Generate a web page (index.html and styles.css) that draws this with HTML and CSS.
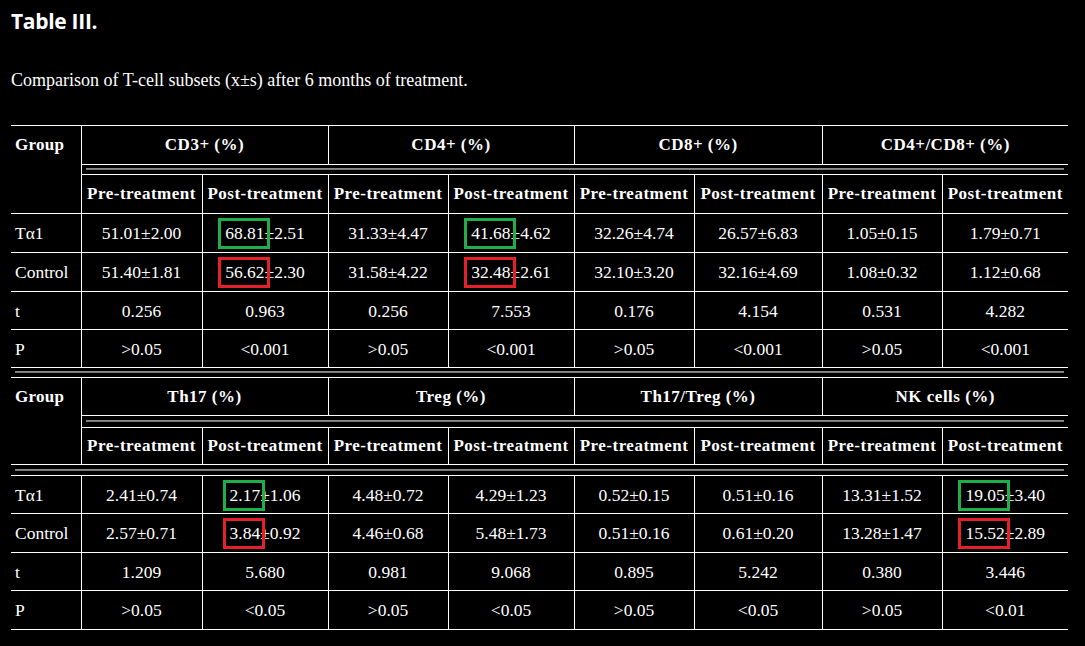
FILE: index.html
```html
<!DOCTYPE html>
<html lang="en">
<head>
<meta charset="utf-8">
<title>Table III.</title>
<link rel="stylesheet" href="styles.css">
</head>
<body>
<div class="page">
  <h1 class="title">Table III.</h1>
  <p class="caption">Comparison of T-cell subsets (x±s) after 6 months of treatment.</p>
  <table class="data">
    <colgroup>
      <col class="c-grp"><col class="c-pre"><col class="c-post"><col class="c-pre2"><col class="c-post"><col class="c-pre2"><col class="c-post2"><col class="c-pre2"><col class="c-post">
    </colgroup>
    <tbody>
      <tr class="p39">
        <th class="grp" rowspan="3">Group</th>
        <th colspan="2">CD3+ (%)</th>
        <th colspan="2">CD4+ (%)</th>
        <th colspan="2">CD8+ (%)</th>
        <th colspan="2">CD4+/CD8+ (%)</th>
      </tr>
      <tr class="sep s10"><td colspan="8"><div class="bar"></div></td></tr>
      <tr class="p39">
        <th>Pre-treatment</th><th>Post-treatment</th>
        <th>Pre-treatment</th><th>Post-treatment</th>
        <th>Pre-treatment</th><th>Post-treatment</th>
        <th>Pre-treatment</th><th>Post-treatment</th>
      </tr>
      <tr class="p39">
        <td class="lbl">Tα1</td>
        <td>51.01±2.00</td><td><span class="hl green">68.81</span>±2.51</td>
        <td>31.33±4.47</td><td><span class="hl green">41.68</span>±4.62</td>
        <td>32.26±4.74</td><td>26.57±6.83</td>
        <td>1.05±0.15</td><td>1.79±0.71</td>
      </tr>
      <tr class="p39">
        <td class="lbl">Control</td>
        <td>51.40±1.81</td><td><span class="hl red">56.62</span>±2.30</td>
        <td>31.58±4.22</td><td><span class="hl red">32.48</span>±2.61</td>
        <td>32.10±3.20</td><td>32.16±4.69</td>
        <td>1.08±0.32</td><td>1.12±0.68</td>
      </tr>
      <tr class="p38">
        <td class="lbl">t</td>
        <td>0.256</td><td>0.963</td><td>0.256</td><td>7.553</td>
        <td>0.176</td><td>4.154</td><td>0.531</td><td>4.282</td>
      </tr>
      <tr class="p38">
        <td class="lbl">P</td>
        <td>&gt;0.05</td><td>&lt;0.001</td><td>&gt;0.05</td><td>&lt;0.001</td>
        <td>&gt;0.05</td><td>&lt;0.001</td><td>&gt;0.05</td><td>&lt;0.001</td>
      </tr>
      <tr class="sep s10"><td colspan="9"><div class="bar"></div></td></tr>
      <tr class="p38">
        <th class="grp" rowspan="3">Group</th>
        <th colspan="2">Th17 (%)</th>
        <th colspan="2">Treg (%)</th>
        <th colspan="2">Th17/Treg (%)</th>
        <th colspan="2">NK cells (%)</th>
      </tr>
      <tr class="sep s12"><td colspan="8"><div class="bar"></div></td></tr>
      <tr class="p37">
        <th>Pre-treatment</th><th>Post-treatment</th>
        <th>Pre-treatment</th><th>Post-treatment</th>
        <th>Pre-treatment</th><th>Post-treatment</th>
        <th>Pre-treatment</th><th>Post-treatment</th>
      </tr>
      <tr class="sep s11"><td colspan="9"><div class="bar"></div></td></tr>
      <tr class="p38">
        <td class="lbl">Tα1</td>
        <td>2.41±0.74</td><td><span class="hl green">2.17</span>±1.06</td>
        <td>4.48±0.72</td><td>4.29±1.23</td>
        <td>0.52±0.15</td><td>0.51±0.16</td>
        <td>13.31±1.52</td><td><span class="hl green">19.05</span>±3.40</td>
      </tr>
      <tr class="p39">
        <td class="lbl">Control</td>
        <td>2.57±0.71</td><td><span class="hl red">3.84</span>±0.92</td>
        <td>4.46±0.68</td><td>5.48±1.73</td>
        <td>0.51±0.16</td><td>0.61±0.20</td>
        <td>13.28±1.47</td><td><span class="hl red">15.52</span>±2.89</td>
      </tr>
      <tr class="p38">
        <td class="lbl">t</td>
        <td>1.209</td><td>5.680</td><td>0.981</td><td>9.068</td>
        <td>0.895</td><td>5.242</td><td>0.380</td><td>3.446</td>
      </tr>
      <tr class="p39">
        <td class="lbl">P</td>
        <td>&gt;0.05</td><td>&lt;0.05</td><td>&gt;0.05</td><td>&lt;0.05</td>
        <td>&gt;0.05</td><td>&lt;0.05</td><td>&gt;0.05</td><td>&lt;0.01</td>
      </tr>
    </tbody>
  </table>
</div>
</body>
</html>
```
FILE: styles.css
```css
html, body {
  margin: 0;
  padding: 0;
  background: #000;
  color: #fff;
}

.page {
  padding: 0 11px;
}

.title {
  margin: 0;
  padding-top: 7px;
  font-family: "Open Sans", "Noto Sans", sans-serif;
  font-weight: 700;
  font-size: 21px;
  line-height: 28px;
  letter-spacing: -0.3px;
}

.caption {
  margin: 35px 0 34px;
  font-family: "Liberation Serif", serif;
  font-size: 18px;
  line-height: 21px;
}

.data {
  width: 1057px;
  table-layout: fixed;
  border-collapse: collapse;
  border-left: hidden;
  border-right: hidden;
  font-family: "Liberation Serif", serif;
  font-size: 17.5px;
  line-height: 22px;
}

.c-grp { width: 70px; }
.c-pre { width: 121px; }
.c-post { width: 126px; }
.c-pre2 { width: 120px; }
.c-post2 { width: 128px; }

.data th,
.data td {
  border: 1px solid #fff;
  padding: 8px 4px;
  text-align: center;
  vertical-align: middle;
  white-space: nowrap;
}

.data th {
  font-weight: 700;
  font-size: 17px;
  letter-spacing: 0.5px;
}

.data .grp {
  text-align: left;
  vertical-align: top;
  letter-spacing: 0.3px;
}

.data .lbl {
  text-align: left;
}

.data tr.p38 > th,
.data tr.p38 > td { padding-top: 8px; padding-bottom: 7px; }
.data tr.p37 > th,
.data tr.p37 > td { padding-top: 7px; padding-bottom: 7px; }
.data tr.p38 > .grp { padding-top: 8px; }

.data tr.sep > td {
  padding: 3px 4px 4px;
  line-height: 0;
}
.data tr.s11 > td { padding: 4px 4px 4px; }
.data tr.s12 > td { padding: 4px 4px 5px; }

.bar {
  height: 2px;
  background: #777;
  border-top: 1px solid #8a8a8a;
  box-sizing: border-box;
}

.hl {
  position: relative;
}

.hl::after {
  content: "";
  position: absolute;
  left: -7px;
  right: -5px;
  top: -5px;
  bottom: -6px;
  border: 3px solid;
  pointer-events: none;
}

.hl.green::after { border-color: #1fae4a; }
.hl.red::after { border-color: #e5202a; }
```
